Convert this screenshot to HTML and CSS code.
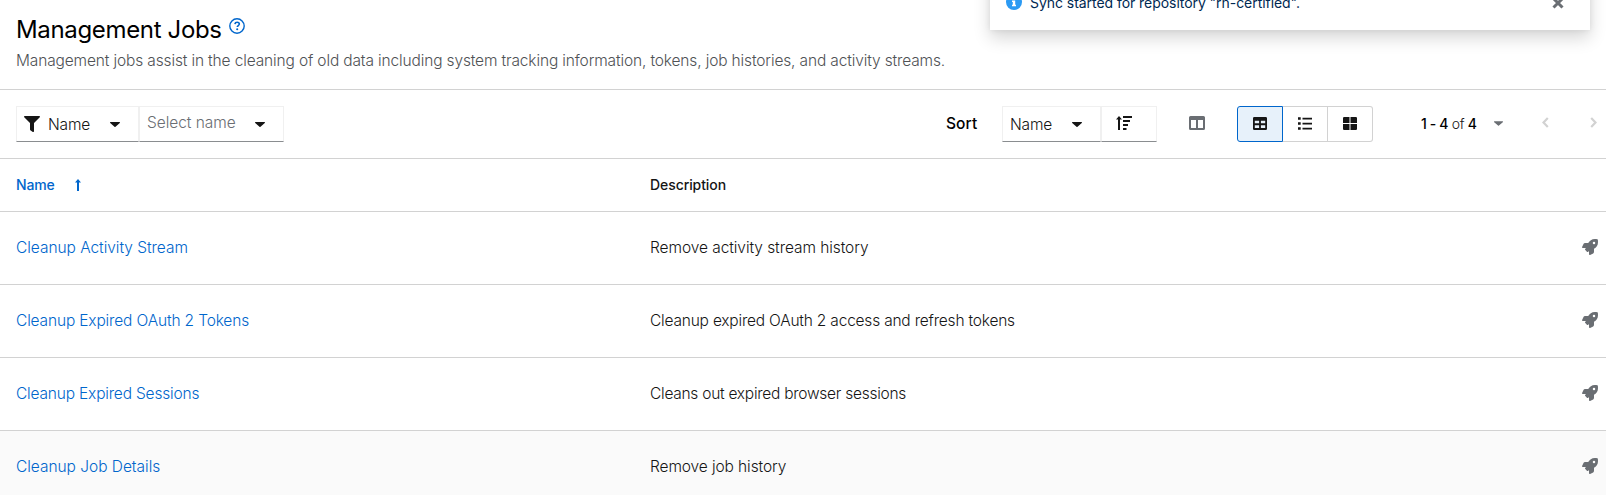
FILE: index.html
```
<!DOCTYPE html>
<html lang="en">
<head>
<meta charset="utf-8">
<title>Management Jobs</title>
<link rel="stylesheet" href="styles.css">
</head>
<body>
<svg class="defs" width="0" height="0">
  <symbol id="rocket" viewBox="0 0 512 512"><path d="M505.12 19.09c-1.19-5.53-6.66-11-12.21-12.18C460.72 0 435.5 0 410.41 0 307.2 0 245.27 55.2 199.05 128H94.84c-16.35 0-35.56 11.88-42.88 26.48L2.53 253.31A28.4 28.4 0 0 0 0 264a24 24 0 0 0 24 24h103.86l-22.46 22.47c-11.37 11.36-13 32.25 0 45.25l50.9 50.91c11.15 11.19 32.15 13.16 45.27 0L224 384.17V488a24 24 0 0 0 24 24 28.55 28.55 0 0 0 10.7-2.53l98.73-49.39c14.63-7.3 26.5-26.5 26.5-42.86V312.79c72.6-46.3 128-108.4 128-211.09.1-25.2.1-50.4-6.81-82.61zM384 168a40 40 0 1 1 40-40 40 40 0 0 1-40 40z"/></symbol>
  <symbol id="caret" viewBox="0 0 10 5"><path d="M.6 0h8.8c.6 0 .8.6.4 1L5.5 4.8a.7.7 0 0 1-1 0L.2 1C-.2.6 0 0 .6 0z"/></symbol>
</svg>
<header class="page-head">
  <div class="title-row">
    <h1 class="title"><span>Management Jobs</span></h1>
    <svg class="help" viewBox="0 0 16 16"><circle cx="8" cy="8" r="7.2" fill="none" stroke="currentColor" stroke-width="1.4"/><path d="M5.9 6.1c.2-1.2 1-1.8 2.2-1.8 1.3 0 2.2.7 2.2 1.8 0 1.5-2 1.5-2 3" fill="none" stroke="currentColor" stroke-width="1.6"/><circle cx="8.2" cy="11.2" r="1.05" fill="currentColor"/></svg>
  </div>
  <p class="subtitle"><span>Management jobs assist in the cleaning of old data including system tracking information, tokens, job histories, and activity streams.</span></p>
</header>
<section class="toolbar">
  <div class="box filter">
    <svg class="funnel" viewBox="0 0 512 512"><path d="M488 0H24C3 0-8 26 7 41l185 185v206c0 8 4 15 10 20l80 56c16 11 38 0 38-20V226L505 41c15-15 4-41-17-41z"/></svg>
    <span class="txt name">Name</span><svg class="caret"><use href="#caret"/></svg>
  </div>
  <div class="box select"><span class="txt placeholder">Select name</span><svg class="caret"><use href="#caret"/></svg></div>
  <span class="sort-label">Sort</span>
  <div class="box sort-by"><span class="txt name">Name</span><svg class="caret"><use href="#caret"/></svg></div>
  <div class="box sort-dir"><svg class="sort-icon" viewBox="0 0 16 14"><path d="M3 0 6 3.4H4V14H2V3.4H0zM7 0h9v2H7zM7 4h7v2H7zM7 8h5v2H7zM7 12h3.500v2H7z"/></svg></div>
  <svg class="columns" viewBox="0 0 16 14"><path fill-rule="evenodd" d="M1.500 0h13A1.500 1.500 0 0 1 16 1.500v11a1.500 1.500 0 0 1-1.500 1.500h-13A1.500 1.500 0 0 1 0 12.500v-11A1.500 1.500 0 0 1 1.500 0zM2 4v8h5V4zM9 4v8h5V4z"/></svg>
  <div class="views">
    <div class="view active"><svg viewBox="0 0 14 13"><path fill-rule="evenodd" d="M1.300 0h11.400A1.300 1.300 0 0 1 14 1.300v10.400a1.300 1.300 0 0 1-1.300 1.300H1.300A1.300 1.300 0 0 1 0 11.700V1.300A1.300 1.300 0 0 1 1.300 0zM1.800 3.700v2.600h4.300V3.700zM7.900 3.700v2.600h4.300V3.700zM1.800 8.200v2.700h4.300V8.200zM7.900 8.200v2.700h4.300V8.200z"/></svg></div>
    <div class="view"><svg viewBox="0 0 14 13"><path d="M0 .2h2.700v2.600H0zM0 5.200h2.700v2.600H0zM0 10.200h2.700v2.600H0zM4.500.7H14v1.700H4.500zM4.500 5.700H14v1.700H4.500zM4.500 10.700H14v1.700H4.500z"/></svg></div>
    <div class="view"><svg viewBox="0 0 14 13"><path d="M.8 0h5.700v6H0V.8zM7.500 0h5.700l.8.800V6H7.500zM0 7h6.500v6H.8l-.8-.8zM7.500 7H14v5.200l-.8.800H7.500z"/></svg></div>
  </div>
  <span class="pages"><b>1 - 4</b> of <b>4</b></span>
  <svg class="caret page-caret"><use href="#caret"/></svg>
  <svg class="chev prev" viewBox="0 0 7 11"><path d="M5.800 1 1.500 5.500 5.800 10"/></svg>
  <svg class="chev" viewBox="0 0 7 11"><path d="M1.200 1 5.500 5.500 1.200 10"/></svg>
</section>
<main class="table">
  <div class="row head"><span class="cell first sorted"><span class="t-name">Name</span><svg class="arrow" viewBox="0 0 6 12"><path d="M3 0 6 3.500H4V12H2V3.500H0z"/></svg></span><span class="cell"><span class="t-desc">Description</span></span></div>
  <div class="row"><a class="cell first"><span class="n1">Cleanup Activity Stream</span></a><span class="cell"><span class="d1">Remove activity stream history</span></span><svg class="rocket"><use href="#rocket"/></svg></div>
  <div class="row"><a class="cell first"><span class="n2">Cleanup Expired OAuth 2 Tokens</span></a><span class="cell"><span class="d2">Cleanup expired OAuth 2 access and refresh tokens</span></span><svg class="rocket"><use href="#rocket"/></svg></div>
  <div class="row"><a class="cell first"><span class="n3">Cleanup Expired Sessions</span></a><span class="cell"><span class="d3">Cleans out expired browser sessions</span></span><svg class="rocket"><use href="#rocket"/></svg></div>
  <div class="row hover"><a class="cell first"><span class="n4">Cleanup Job Details</span></a><span class="cell"><span class="d4">Remove job history</span></span><svg class="rocket"><use href="#rocket"/></svg></div>
</main>
<aside class="alert">
  <svg class="info" viewBox="0 0 16 16"><circle cx="8" cy="8" r="8" fill="#2b9af3"/><path fill="#fff" d="M6.800 3h2.400v2.400H6.800zM6 6.600h3.200v4.200H10v1.500H6v-1.500h.800V8H6z"/></svg>
  <span class="alert-text">Sync started for repository "rh-certified".</span>
  <svg class="close" viewBox="0 0 12 12"><path d="M1.500 1.500l9 9M10.500 1.500l-9 9" stroke="#6a6e73" stroke-width="3" fill="none"/></svg>
</aside>
</body>
</html>
```
FILE: styles.css
```
* { box-sizing: border-box; }
body { margin: 0; height: 495px; overflow: hidden; position: relative; background: #fff; color: #151515; font: 300 15.5px/24px Inter, "Liberation Sans", sans-serif; white-space: nowrap; }
svg { display: block; flex: none; fill: currentColor; }
.defs { position: absolute; }
.page-head { height: 90px; padding: 13px 16px 0; border-bottom: 1px solid #d2d2d2; }
.title-row { display: flex; height: 32px; }
.title { margin: 0; width: 205px; font-size: 24px; line-height: 34px; font-weight: 400; color: #000; letter-spacing: -.34px; }
.help { width: 16px; height: 16px; margin: 5px 0 0 8px; color: #06c; }
.subtitle { margin: 4px 0 0; color: #4f5255; letter-spacing: -.14px; }
.toolbar { display: flex; align-items: center; height: 69px; padding-left: 16px; border-bottom: 1px solid #d2d2d2; }
.box { display: flex; align-items: center; height: 36px; border: 1px solid #f0f0f0; border-bottom-color: #8a8d90; }
.filter { width: 123px; padding-left: 7px; }
.funnel { width: 16px; height: 16px; margin-right: 8px; }
.txt { display: block; width: 62px; }
.name { margin-top: 1px; letter-spacing: -.2px; }
.caret { width: 10px; height: 5px; }
.select { width: 145px; padding-left: 7px; }
.placeholder { width: 108px; color: #6a6e73; margin-top: -2px; letter-spacing: -.05px; }
.sort-label { margin: 0 0 0 662px; width: 56px; font-weight: 500; color: #000; letter-spacing: .1px; }
.sort-by { width: 99px; padding-left: 7px; }
.sort-dir { width: 56px; padding-left: 14px; }
.sort-icon { width: 16px; height: 14px; margin-top: -2px; }
.columns { width: 16px; height: 14px; margin: -2px 32px 0; color: #6a6e73; }
.views { display: flex; }
.view { display: flex; align-items: center; justify-content: center; width: 45px; height: 36px; border: 1px solid #d2d2d2; border-left: 0; }
.view svg { width: 14px; height: 13px; margin-top: -1px; }
.view.active { width: 46px; border: 1px solid #06c; background: #e7f1fa; border-radius: 3px 0 0 3px; }
.view:last-child { border-radius: 0 3px 3px 0; }
.pages { margin: 0 0 0 48px; width: 73px; font-size: 14px; letter-spacing: -.35px; }
.pages b { font-weight: 500; color: #000; }
.page-caret { color: #6a6e73; width: 9px; margin-top: -1px; }
.chev { width: 7px; height: 11px; fill: none; stroke: #d2d2d2; stroke-width: 2.200; margin-top: -3px; }
.prev { margin: -3px 41px 0 39px; }
.row { display: flex; align-items: center; height: 73px; padding-left: 16px; border-bottom: 1px solid #d2d2d2; }
.head { height: 53px; font-size: 14px; font-weight: 500; }
.first { width: 634px; flex: none; color: #06c; }
.sorted { display: flex; align-items: center; }
.t-name { width: 59px; letter-spacing: -.15px; }
.t-desc { letter-spacing: -.08px; }
.arrow { width: 6px; height: 12px; }
.cell + .cell { flex: 1; }
.n1 { letter-spacing: -.04px; }
.n2 { letter-spacing: -.15px; }
.n3 { letter-spacing: -.18px; }
.n4 { letter-spacing: -.03px; }
.d1 { letter-spacing: -.07px; }
.d2 { letter-spacing: -.2px; }
.d3 { letter-spacing: -.26px; }
.d4 { letter-spacing: -.1px; }
.rocket { width: 16px; height: 16px; margin: 0 8px 2px 0; color: #6a6e73; }
.hover { background: #fafafa; }
.alert { position: absolute; top: -34px; left: 990px; width: 600px; height: 64px; padding: 21px 0 0 16px; display: flex; background: #fff; box-shadow: 0 8px 16px rgba(3,3,3,.16), 0 0 6px rgba(3,3,3,.08); color: #002952; font-size: 14px; font-weight: 400; }
.info { width: 16px; height: 16px; margin: 7px 8px 0 0; }
.alert-text { width: 522px; margin-top: 4px; letter-spacing: -.05px; }
.close { width: 12px; height: 12px; margin-top: 10px; }
```
